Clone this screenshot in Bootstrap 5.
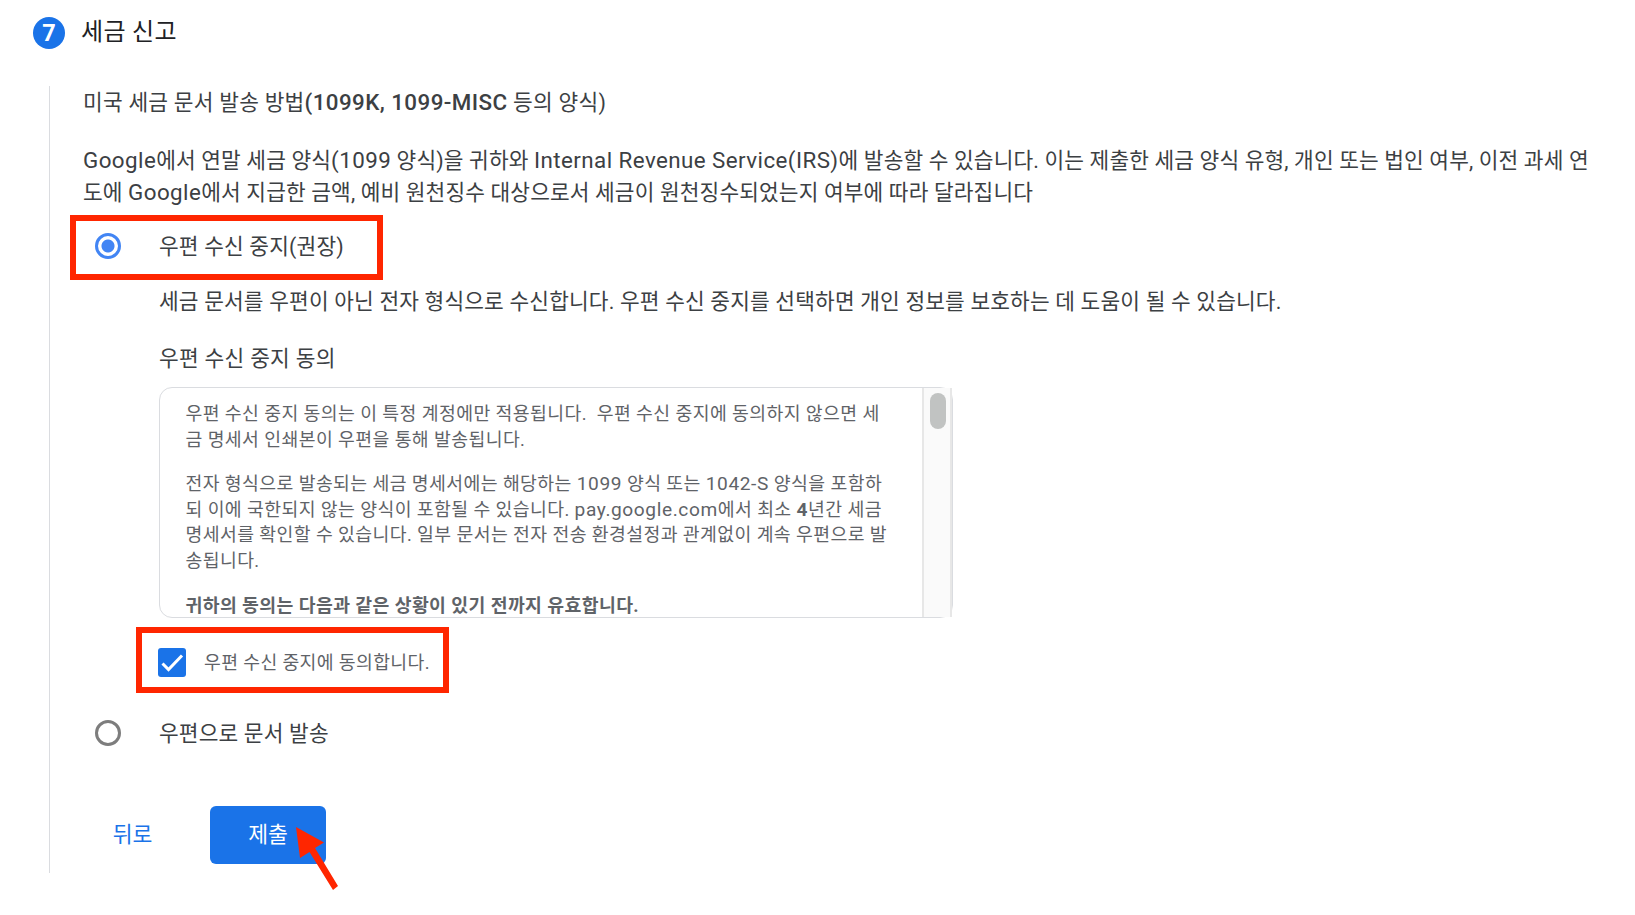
<!doctype html>
<html lang="ko">
<head>
    <meta charset="UTF-8">
    <meta name="viewport" content="width=device-width, initial-scale=1.0">
    <title>세금 신고</title>
    <link href="https://cdn.jsdelivr.net/npm/bootstrap@5.3.2/dist/css/bootstrap.min.css" rel="stylesheet">
    <script src="https://cdn.jsdelivr.net/npm/bootstrap@5.3.2/dist/js/bootstrap.bundle.min.js"></script>

    <style>
        body {
            font-family: Roboto, "Noto Sans CJK KR", sans-serif;
            font-size: 21.4px;
            line-height: 32px;
            letter-spacing: .17px;
            color: #3c4043;
            overflow: hidden;
        }

        .nowrap-line {
            white-space: nowrap;
        }

        /* latin runs sit slightly larger than the hangul around them */
        .latin {
            font-size: 1.045em;
            letter-spacing: .43px;
            line-height: 1;
        }

        .step-header {
            padding: 17px 0 0 33px;
            gap: 16px;
            height: 86px;
        }

        .step-number {
            width: 32px;
            height: 32px;
            background: #1a73e8;
            font-size: 23.5px;
            letter-spacing: 0;
        }

        .step-title {
            font-size: 24px;
            letter-spacing: .3px;
            color: #202124;
            margin-top: -1px;
        }

        .step-body {
            margin-left: 49px;
            padding-left: 33px;
            border-left: 1px solid #dadce0;
            height: 787px;
        }

        .step-subtitle {
            padding-top: 1px;
            letter-spacing: .25px;
        }

        .intro-text {
            margin-top: 26px;
            letter-spacing: .14px;
        }

        .option-row {
            height: 32px;
            gap: 38px;
            padding-left: 12px;
        }

        .option-row span {
            padding-top: 1px;
        }

        .form-check-input.option-radio {
            width: 26px;
            height: 26px;
            margin: 0;
            border: 3px solid #7d7d7d;
            background: #fff;
        }

        .form-check-input.option-radio:checked {
            border-color: #4285f4;
            background: radial-gradient(circle, #4285f4 6px, #fff 7px);
        }

        .option-detail {
            padding-left: 76px;
        }

        .consent-box {
            width: 794px;
            height: 231px;
            border: 1px solid #dadce0;
            border-radius: 13px;
            color: #5f6368;
            font-size: 18.3px;
            line-height: 25.6px;
            letter-spacing: .4px;
        }

        .consent-box .latin {
            letter-spacing: .6px;
        }

        .consent-text {
            padding: 13px 0 0 25.5px;
            height: 229px;
            overflow: hidden;
        }

        .consent-text p {
            margin-bottom: 19px;
        }

        .scroll-track {
            width: 30px;
            background: #fafafa;
            border: solid #e7e7e7;
            border-width: 0 2px;
            padding: 5px 0 0 6px;
        }

        .scroll-thumb {
            width: 16px;
            height: 36px;
            background: #c1c3c2;
        }

        .consent-check {
            gap: 18px;
            margin: 28px 0 0 -1px;
            color: #5f6368;
            font-size: 18.3px;
            letter-spacing: .35px;
            height: 32px;
        }

        .consent-check span {
            padding-top: 1px;
        }

        .step-actions {
            margin-top: 57px;
            gap: 29px;
        }

        .step-actions .btn {
            font-size: 21.6px;
            height: 58px;
            border-radius: 6px;
            border: 0;
            padding: 0;
        }

        .btn-back {
            width: 99px;
            margin-right: -1px;
            color: #1a73e8;
        }

        .btn-submit {
            width: 116px;
            color: #fff;
            background: #1a73e8;
        }

        .callout {
            border: 6px solid #ff2600;
        }
    </style>
</head>
<body class="bg-white">
<header class="step-header d-flex align-items-start">
    <div class="step-number rounded-circle text-white fw-bold d-flex align-items-center justify-content-center">7</div>
    <div class="step-title">세금 신고</div>
</header>

<main class="step-body">
    <div class="step-subtitle nowrap-line">미국 세금 문서 발송 방법<span class="latin" style="font-weight: 500">(1099K, 1099-MISC</span> 등의 양식)</div>
    <div class="intro-text nowrap-line">
        <div><span class="latin">Google</span>에서 연말 세금 양식<span class="latin">(1099</span> 양식)을 귀하와 <span class="latin">Internal Revenue Service(IRS)</span>에 발송할 수 있습니다. 이는 제출한 세금 양식 유형, 개인 또는 법인 여부, 이전 과세 연</div>
        <div>도에 <span class="latin">Google</span>에서 지급한 금액, 예비 원천징수 대상으로서 세금이 원천징수되었는지 여부에 따라 달라집니다</div>
    </div>

    <label class="option-row d-flex align-items-center" style="margin-top: 21px">
        <input class="form-check-input option-radio" type="radio" name="delivery" checked>
        <span>우편 수신 중지(권장)</span>
    </label>

    <div class="option-detail">
        <div class="nowrap-line" style="padding-top: 24px">세금 문서를 우편이 아닌 전자 형식으로 수신합니다. 우편 수신 중지를 선택하면 개인 정보를 보호하는 데 도움이 될 수 있습니다.</div>
        <div style="margin-top: 25px; letter-spacing: .3px">우편 수신 중지 동의</div>
        <div class="consent-box d-flex" style="margin-top: 12px">
            <div class="consent-text flex-grow-1 nowrap-line">
                <p>우편 수신 중지 동의는 이 특정 계정에만 적용됩니다.&nbsp; 우편 수신 중지에 동의하지 않으면 세<br>금 명세서 인쇄본이 우편을 통해 발송됩니다.</p>
                <p>전자 형식으로 발송되는 세금 명세서에는 해당하는 <span class="latin">1099</span> 양식 또는 <span class="latin">1042-S</span> 양식을 포함하<br>되 이에 국한되지 않는 양식이 포함될 수 있습니다. <span class="latin">pay.google.com</span>에서 최소 <b class="latin">4</b>년간 세금<br>명세서를 확인할 수 있습니다. 일부 문서는 전자 전송 환경설정과 관계없이 계속 우편으로 발<br>송됩니다.</p>
                <p class="fw-bold">귀하의 동의는 다음과 같은 상황이 있기 전까지 유효합니다.</p>
            </div>
            <div class="scroll-track flex-shrink-0">
                <div class="scroll-thumb rounded-pill"></div>
            </div>
        </div>
        <label class="consent-check d-flex align-items-center">
            <svg width="28" height="29" viewBox="0 0 28 29">
                <rect width="28" height="29" rx="3" fill="#1a73e8"/>
                <path d="M4.5 15.5 L10.5 21.5 L24 7.5" fill="none" stroke="#fff" stroke-width="3"/>
            </svg>
            <span>우편 수신 중지에 동의합니다.</span>
        </label>
    </div>

    <label class="option-row d-flex align-items-center" style="margin-top: 39px">
        <input class="form-check-input option-radio" type="radio" name="delivery">
        <span>우편으로 문서 발송</span>
    </label>

    <div class="step-actions d-flex">
        <button type="button" class="btn btn-back">뒤로</button>
        <button type="button" class="btn btn-submit">제출</button>
    </div>
</main>

<!-- callouts drawn over the form -->
<div class="callout position-absolute" style="left: 70px; top: 215px; width: 313px; height: 65px"></div>
<div class="callout position-absolute" style="left: 136px; top: 627px; width: 313px; height: 66px"></div>
<svg class="position-absolute" style="left: 290px; top: 820px" width="54" height="74" viewBox="0 0 54 74">
    <path d="M6 7 L34 22.5 L25 28 L48 66 L43 70 L19.5 32 L10 38 Z" fill="#ff2600"/>
</svg>
</body>
</html>
